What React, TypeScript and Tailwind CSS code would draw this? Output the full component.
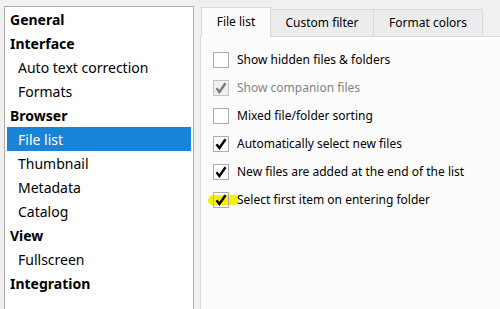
import React from "react";

const font = { fontFamily: '"Noto Sans", "Open Sans", sans-serif' };

type NavItem = { label: string; bold?: boolean; selected?: boolean };

const nav: NavItem[] = [
  { label: "General", bold: true },
  { label: "Interface", bold: true },
  { label: "Auto text correction" },
  { label: "Formats" },
  { label: "Browser", bold: true },
  { label: "File list", selected: true },
  { label: "Thumbnail" },
  { label: "Metadata" },
  { label: "Catalog" },
  { label: "View", bold: true },
  { label: "Fullscreen" },
  { label: "Integration", bold: true },
];

function Check({ color }: { color: string }) {
  return (
    <svg width="12" height="12" viewBox="0 0 12 12">
      <path d="M1.5 6.2 L4.4 10 L10.5 1.2" fill="none" stroke={color} strokeWidth="2.4" strokeLinejoin="miter" />
    </svg>
  );
}

type Opt = { label: string; checked?: boolean; disabled?: boolean; highlight?: boolean };
const opts: Opt[] = [
  { label: "Show hidden files & folders" },
  { label: "Show companion files", checked: true, disabled: true },
  { label: "Mixed file/folder sorting" },
  { label: "Automatically select new files", checked: true },
  { label: "New files are added at the end of the list", checked: true },
  { label: "Select first item on entering folder", checked: true, highlight: true },
];

export default function App() {
  return (
    <div className="w-[500px] h-[309px] bg-[#f0f0f0] overflow-hidden flex pl-[4px] pt-[6px] text-black" style={font}>
      <div className="w-[190px] h-[320px] shrink-0 bg-white border border-[#acacac] px-[2px] text-[14px]">
        {nav.map((n) => (
          <div
            key={n.label}
            className={`h-[24px] flex items-center ${n.bold ? "pl-[3px] font-bold" : "pl-[11px]"} ${
              n.selected ? "bg-[#1883d7] text-white" : ""
            }`}
          >
            {n.label}
          </div>
        ))}
      </div>
      <div className="ml-[6px] flex-1 flex flex-col text-[12px]">
        <div className="flex items-end h-[30px] pl-[1px]">
          <div className="w-[70px] h-[30px] bg-[#fcfcfc] border border-b-0 border-[#d9d9d9] flex items-center justify-center relative z-10 -mb-px pb-[2px]">
            File list
          </div>
          <div className="w-[103px] h-[27px] bg-[#ececec] border border-l-0 border-b-0 border-[#d9d9d9] flex items-center justify-center">
            Custom filter
          </div>
          <div className="w-[109px] h-[27px] bg-[#ececec] border border-l-0 border-b-0 border-[#d9d9d9] flex items-center justify-center">
            Format colors
          </div>
        </div>
        <div className="flex-1 bg-[#fcfcfc] border-t border-l border-[#d9d9d9] pt-[9px] pl-[12px]">
          {opts.map((o) => (
            <div key={o.label} className="h-[28px] flex items-center relative">
              {o.highlight && (
                <div className="absolute left-[-5px] top-[9px] w-[31px] h-[10px] rounded-full bg-[#f5f000] -rotate-2" />
              )}
              <div
                className={`relative w-[16px] h-[16px] border flex items-center justify-center ${
                  o.disabled
                    ? "bg-[#f0f0f0] border-[#c5c5c5]"
                    : o.highlight
                    ? "border-[#adadad]"
                    : "bg-white border-[#adadad]"
                }`}
              >
                {o.checked && <Check color={o.disabled ? "#7a7a7a" : "#000"} />}
              </div>
              <span className={`relative ml-[8px] ${o.disabled ? "text-[#838383]" : ""}`}>{o.label}</span>
            </div>
          ))}
        </div>
      </div>
    </div>
  );
}
